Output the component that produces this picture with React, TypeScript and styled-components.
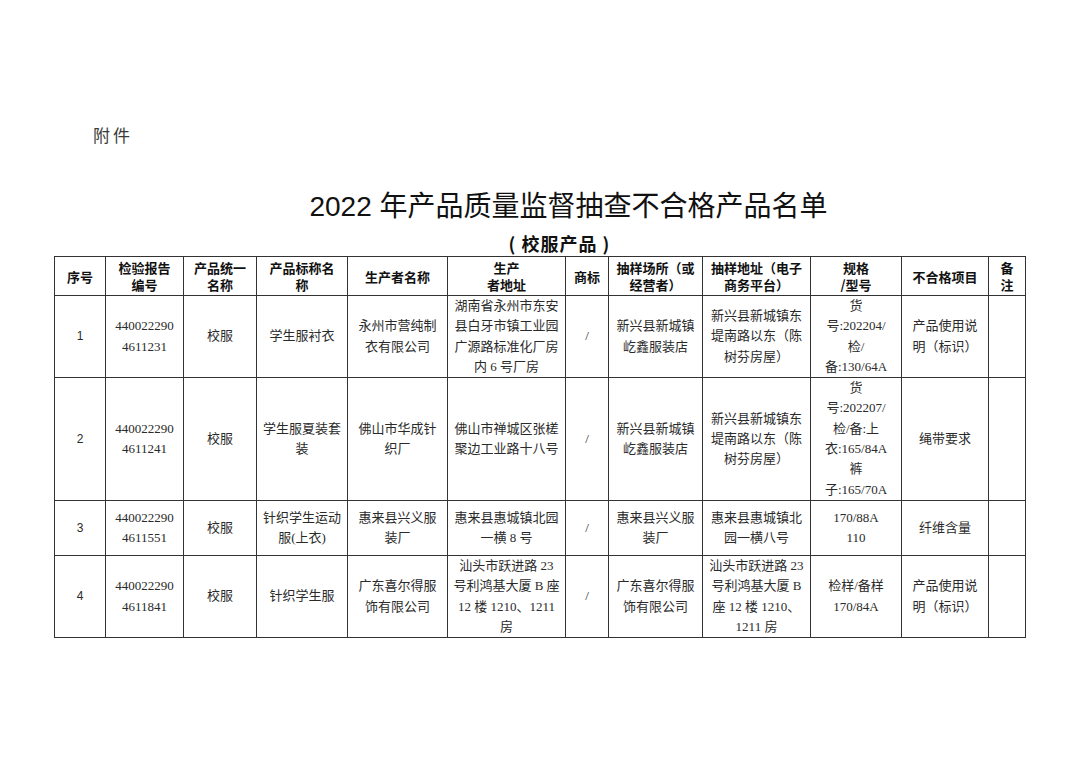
import React from 'react';
import styled, { createGlobalStyle } from 'styled-components';

const GlobalStyle = createGlobalStyle`
  html, body {
    margin: 0;
    padding: 0;
    background: #ffffff;
  }
  body {
    font-family: "Liberation Serif", "Noto Sans CJK SC", serif;
    color: #222;
  }
`;

const Page = styled.div`
  width: 1080px;
  height: 764px;
  box-sizing: border-box;
  padding-top: 123px;
  padding-left: 54px;
  overflow: hidden;
`;

const Attachment = styled.div`
  margin-left: 39px;
  font-family: "Noto Sans CJK SC", sans-serif;
  font-size: 17px;
  line-height: 24px;
  letter-spacing: 3px;
  color: #3a3a3a;
`;

const Title = styled.div`
  width: 971px;
  margin-top: 43px;
  padding-left: 58px;
  box-sizing: border-box;
  text-align: center;
  font-family: "Liberation Sans", "Noto Sans CJK SC", sans-serif;
  font-size: 28px;
  line-height: 34px;
  color: #111;
`;

const SubTitle = styled.div`
  width: 971px;
  margin-top: 8px;
  padding-left: 40px;
  box-sizing: border-box;
  text-align: center;
  font-family: "Noto Sans CJK SC", sans-serif;
  font-weight: 700;
  font-size: 18px;
  line-height: 22px;
  letter-spacing: 1px;
  color: #111;
`;

const Table = styled.table`
  margin-top: 2px;
  width: 971px;
  border-collapse: collapse;
  table-layout: fixed;
`;

const HeadCell = styled.th`
  border: 1px solid #333;
  padding: 0;
  font-family: "Noto Sans CJK SC", sans-serif;
  font-weight: 700;
  font-size: 13px;
  line-height: 17px;
  color: #111;
  text-align: center;
  vertical-align: middle;
  white-space: nowrap;
`;

const Row = styled.tr<{ $h: number }>`
  height: ${(p) => p.$h}px;
`;

const Cell = styled.td<{ $sans?: boolean }>`
  border: 1px solid #333;
  padding: 0;
  font-family: ${(p) =>
    p.$sans
      ? '"Liberation Sans", "Noto Sans CJK SC", sans-serif'
      : '"Liberation Serif", "Noto Sans CJK SC", serif'};
  font-size: ${(p) => (p.$sans ? '12px' : '13px')};
  line-height: 20.3px;
  color: #2a2a2a;
  text-align: center;
  vertical-align: middle;
  white-space: nowrap;
`;

const widths = [51, 78, 73, 91, 100, 118, 43, 94, 108, 91, 87, 37];

const headers: string[][] = [
  ['序号'],
  ['检验报告', '编号'],
  ['产品统一', '名称'],
  ['产品标称名', '称'],
  ['生产者名称'],
  ['生产', '者地址'],
  ['商标'],
  ['抽样场所（或', '经营者）'],
  ['抽样地址（电子', '商务平台）'],
  ['规格', '/型号'],
  ['不合格项目'],
  ['备', '注'],
];

type RowData = { h: number; cells: string[][] };

const rows: RowData[] = [
  {
    h: 82,
    cells: [
      ['1'],
      ['440022290', '4611231'],
      ['校服'],
      ['学生服衬衣'],
      ['永州市营纯制', '衣有限公司'],
      ['湖南省永州市东安', '县白牙市镇工业园', '广源路标准化厂房', '内 6 号厂房'],
      ['/'],
      ['新兴县新城镇', '屹鑫服装店'],
      ['新兴县新城镇东', '堤南路以东（陈', '树芬房屋）'],
      ['货', '号:202204/', '检/', '备:130/64A'],
      ['产品使用说', '明（标识）'],
      [],
    ],
  },
  {
    h: 121,
    cells: [
      ['2'],
      ['440022290', '4611241'],
      ['校服'],
      ['学生服夏装套', '装'],
      ['佛山市华成针', '织厂'],
      ['佛山市禅城区张槎', '聚边工业路十八号'],
      ['/'],
      ['新兴县新城镇', '屹鑫服装店'],
      ['新兴县新城镇东', '堤南路以东（陈', '树芬房屋）'],
      ['货', '号:202207/', '检/备:上', '衣:165/84A', '裤', '子:165/70A'],
      ['绳带要求'],
      [],
    ],
  },
  {
    h: 55,
    cells: [
      ['3'],
      ['440022290', '4611551'],
      ['校服'],
      ['针织学生运动', '服(上衣)'],
      ['惠来县兴义服', '装厂'],
      ['惠来县惠城镇北园', '一横 8 号'],
      ['/'],
      ['惠来县兴义服', '装厂'],
      ['惠来县惠城镇北', '园一横八号'],
      ['170/88A', '110'],
      ['纤维含量'],
      [],
    ],
  },
  {
    h: 82,
    cells: [
      ['4'],
      ['440022290', '4611841'],
      ['校服'],
      ['针织学生服'],
      ['广东喜尔得服', '饰有限公司'],
      ['汕头市跃进路 23', '号利鸿基大厦 B 座', '12 楼 1210、1211', '房'],
      ['/'],
      ['广东喜尔得服', '饰有限公司'],
      ['汕头市跃进路 23', '号利鸿基大厦 B', '座 12 楼 1210、', '1211 房'],
      ['检样/备样', '170/84A'],
      ['产品使用说', '明（标识）'],
      [],
    ],
  },
];

function Lines({ lines }: { lines: string[] }) {
  return (
    <>
      {lines.map((l, i) => (
        <React.Fragment key={i}>
          {i > 0 && <br />}
          {l}
        </React.Fragment>
      ))}
    </>
  );
}

export default function App() {
  return (
    <>
      <GlobalStyle />
      <Page>
        <Attachment>附件</Attachment>
        <Title>2022 年产品质量监督抽查不合格产品名单</Title>
        <SubTitle>( 校服产品 )</SubTitle>
        <Table>
          <colgroup>
            {widths.map((w, i) => (
              <col key={i} style={{ width: w }} />
            ))}
          </colgroup>
          <thead>
            <Row $h={39}>
              {headers.map((h, i) => (
                <HeadCell key={i}>
                  <Lines lines={h} />
                </HeadCell>
              ))}
            </Row>
          </thead>
          <tbody>
            {rows.map((r, ri) => (
              <Row key={ri} $h={r.h}>
                {r.cells.map((c, ci) => (
                  <Cell key={ci} $sans={ci === 0}>
                    <Lines lines={c} />
                  </Cell>
                ))}
              </Row>
            ))}
          </tbody>
        </Table>
      </Page>
    </>
  );
}
